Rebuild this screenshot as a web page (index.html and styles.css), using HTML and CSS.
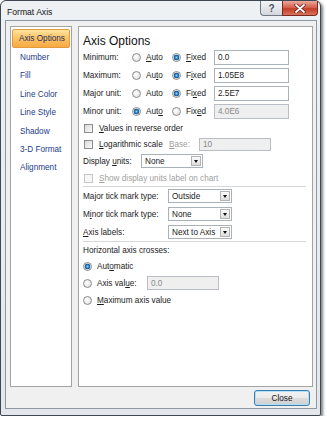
FILE: index.html
```html
<!DOCTYPE html>
<html lang="en">

<head>
    <meta charset="UTF-8">
    <meta name="viewport" content="width=device-width, initial-scale=1.0">
    <title>Format Axis</title>
    <link rel="stylesheet" href="styles.css">
</head>

<body>
    <div class="window">
        <div class="titlebar">
            <div class="title">Format Axis</div>
            <div class="caption-btns">
                <div class="cbtn help">?</div>
                <div class="cbtn close">
                    <svg width="12" height="9" viewBox="0 0 12 9">
                        <path d="M2 1 L10 8 M10 1 L2 8" stroke="#5a1e16" stroke-width="3.2" stroke-linecap="round" />
                        <path d="M2 1 L10 8 M10 1 L2 8" stroke="#fff" stroke-width="1.8" stroke-linecap="round" />
                    </svg>
                </div>
            </div>
        </div>

        <div class="client">
            <div class="main">
                <ul class="nav">
                    <li class="active">Axis Options</li>
                    <li>Number</li>
                    <li>Fill</li>
                    <li>Line Color</li>
                    <li>Line Style</li>
                    <li>Shadow</li>
                    <li>3-D Format</li>
                    <li>Alignment</li>
                </ul>

                <div class="panel">
                    <h2>Axis Options</h2>

                    <div class="row">
                        <span class="lbl">Minimum:</span>
                        <span class="opt"><span class="radio"></span><u>A</u>uto</span>
                        <span class="opt2"><span class="radio on"></span><u>F</u>ixed</span>
                        <span class="input">0.0</span>
                    </div>
                    <div class="row">
                        <span class="lbl">Maximum:</span>
                        <span class="opt"><span class="radio"></span>Au<u>t</u>o</span>
                        <span class="opt2"><span class="radio on"></span>F<u>i</u>xed</span>
                        <span class="input">1.05E8</span>
                    </div>
                    <div class="row">
                        <span class="lbl">Major unit:</span>
                        <span class="opt"><span class="radio"></span>Auto</span>
                        <span class="opt2"><span class="radio on"></span>Fi<u>x</u>ed</span>
                        <span class="input">2.5E7</span>
                    </div>
                    <div class="row">
                        <span class="lbl">Minor unit:</span>
                        <span class="opt"><span class="radio on"></span>Aut<u>o</u></span>
                        <span class="opt2"><span class="radio"></span>Fix<u>e</u>d</span>
                        <span class="input disabled">4.0E6</span>
                    </div>

                    <div class="row short">
                        <span class="check"></span><span><u>V</u>alues in reverse order</span>
                    </div>
                    <div class="row short">
                        <span class="check"></span><span class="log"><u>L</u>ogarithmic scale</span>
                        <span class="muted base"><u>B</u>ase:</span>
                        <span class="input disabled base-input">10</span>
                    </div>
                    <div class="row">
                        <span class="lbl-units">Display <u>u</u>nits:</span>
                        <span class="select units">None<span class="drop"></span></span>
                    </div>
                    <div class="row short">
                        <span class="check disabled"></span><span class="muted"><u>S</u>how display units label on chart</span>
                    </div>

                    <div class="sep"></div>

                    <div class="row">
                        <span class="lbl-tick">Ma<u>j</u>or tick mark type:</span>
                        <span class="select tick">Outside<span class="drop"></span></span>
                    </div>
                    <div class="row">
                        <span class="lbl-tick">M<u>i</u>nor tick mark type:</span>
                        <span class="select tick">None<span class="drop"></span></span>
                    </div>
                    <div class="row">
                        <span class="lbl-tick"><u>A</u>xis labels:</span>
                        <span class="select tick">Next to Axis<span class="drop"></span></span>
                    </div>

                    <div class="sep"></div>

                    <div class="row short">Horizontal axis crosses:</div>
                    <div class="row short">
                        <span class="radio on"></span>Aut<u>o</u>matic
                    </div>
                    <div class="row">
                        <span class="radio"></span><span class="axis-val">Axis val<u>u</u>e:</span>
                        <span class="input disabled axis-input">0.0</span>
                    </div>
                    <div class="row short">
                        <span class="radio"></span><u>M</u>aximum axis value
                    </div>
                </div>
            </div>

            <div class="footer">
                <div class="button">Close</div>
            </div>
        </div>
    </div>
</body>

</html>
```

FILE: styles.css
```css
* {
    box-sizing: border-box;
    margin: 0;
    padding: 0;
}

body {
    background: #fff;
    font-family: "Liberation Sans", Arial, sans-serif;
    font-size: 8.2px;
    color: #1b1b1b;
}

u {
    text-decoration: underline;
}

.window {
    width: 321px;
    height: 416px;
    border: 1px solid #3e4753;
    border-radius: 6px 6px 2px 2px;
    background: linear-gradient(#eef1f4, #e3e7eb);
    box-shadow: 2px 2px 3px rgba(0, 0, 0, 0.5);
}

.titlebar {
    display: flex;
    height: 19px;
}

.title {
    padding: 6px 0 0 6px;
    font-size: 8.6px;
    color: #111;
}

.caption-btns {
    display: flex;
    margin-left: auto;
    margin-right: 2px;
}

.cbtn {
    display: flex;
    align-items: center;
    justify-content: center;
    height: 15px;
    border: 1px solid #6d7884;
    border-top: none;
}

.help {
    width: 22px;
    border-radius: 0 0 0 4px;
    background: linear-gradient(#f4f6f8, #d3d8de);
    color: #4b5460;
    font-size: 10px;
    font-weight: bold;
    border-right: none;
}

.close {
    width: 36px;
    border-radius: 0 0 4px 0;
    border-color: #7a2a20;
    background: linear-gradient(#eaa99e, #d35a45 50%, #c23b25 55%, #d9745c);
}

.client {
    margin: 0 3px 0 4px;
    height: 389px;
    border: 1px solid #8e98a3;
    background: #f0f0f0;
    padding: 5px 3px 0 4px;
}

.main {
    display: flex;
    gap: 6px;
    height: 361px;
}

.nav {
    list-style: none;
    width: 62px;
    background: #fff;
    border: 1px solid #a3a3a3;
    padding: 2px 1px;
}

.nav li {
    height: 18.4px;
    line-height: 18.4px;
    padding-left: 8px;
    color: #233d8a;
}

.nav li.active {
    height: 19px;
    margin-bottom: 1px;
    padding-left: 6px;
    border: 1px solid #e39a3b;
    border-radius: 2px;
    background: linear-gradient(#fde4a0, #fbc467 45%, #f8a944);
    color: #1d2f58;
}

.panel {
    flex: 1;
    background: #fff;
    border: 1px solid #a3a3a3;
    padding: 7px 5px 0 4px;
}

h2 {
    height: 14px;
    line-height: 14px;
    font-size: 12px;
    font-weight: normal;
    color: #111;
}

.row {
    display: flex;
    align-items: center;
    height: 18px;
    white-space: nowrap;
}

.row.short {
    height: 16px;
}

.row.short + .row.short + .row.short {
    height: 17px;
}

.lbl {
    width: 49px;
}

.opt {
    display: flex;
    align-items: center;
    width: 40px;
}

.opt2 {
    display: flex;
    align-items: center;
    width: 42px;
}

.radio {
    width: 9px;
    height: 9px;
    margin-right: 5px;
    border: 1px solid #8c8c8c;
    border-radius: 50%;
    background: radial-gradient(circle at 40% 40%, #fff, #d9d9d9);
    flex-shrink: 0;
}

.radio.on {
    background: radial-gradient(circle, #8fd3f6 0, #2a7fc4 1.6px, #0f4f8e 2.6px, #fff 3.2px, #e2e2e2 4px);
}

.check {
    width: 9px;
    height: 9px;
    margin: 0 6px 0 1px;
    border: 1px solid #8c8c8c;
    background: linear-gradient(135deg, #d8d8d8, #fbfbfb);
    flex-shrink: 0;
}

.check.disabled {
    border-color: #c6c6c6;
    background: #f6f6f6;
}

.input {
    display: flex;
    align-items: center;
    width: 75px;
    height: 15px;
    padding-left: 3px;
    border: 1px solid #a9b1b9;
    background: #fff;
}

.input.disabled {
    background: #efefef;
    border-color: #b8bec4;
    color: #8a8a8a;
}

.muted {
    color: #a0a0a0;
}

.log {
    width: 70px;
}

.base {
    width: 30px;
}

.base-input {
    width: 72px;
    height: 13px;
}

.lbl-units {
    width: 58px;
}

.lbl-tick {
    width: 85px;
}

.select {
    position: relative;
    display: flex;
    align-items: center;
    height: 14px;
    padding-left: 3px;
    border: 1px solid #a9b1b9;
    background: #fff;
}

.units {
    width: 62px;
}

.tick {
    width: 64px;
}

.drop {
    position: absolute;
    top: 1px;
    right: 1px;
    width: 10px;
    height: 10px;
    border: 1px solid #b3b3b3;
    background: linear-gradient(#fbfbfb, #dedede);
}

.drop::after {
    content: "";
    position: absolute;
    left: 2px;
    top: 3px;
    border-left: 2.5px solid transparent;
    border-right: 2.5px solid transparent;
    border-top: 3px solid #111;
}

.sep {
    height: 1px;
    margin: 0 1px 0 0;
    background: #d7d7d7;
}

.axis-val {
    width: 50px;
}

.axis-input {
    width: 72px;
    height: 14px;
}

.footer {
    display: flex;
    justify-content: flex-end;
    padding: 3px 3px 0 0;
}

.button {
    display: flex;
    align-items: center;
    justify-content: center;
    width: 56px;
    height: 16px;
    border: 1px solid #3d7bad;
    border-radius: 3px;
    background: linear-gradient(#f2f2f2, #ebebeb 50%, #dddddd 51%, #cfcfcf);
    box-shadow: inset 0 0 0 1px #aee0f7;
    color: #111;
}
```
